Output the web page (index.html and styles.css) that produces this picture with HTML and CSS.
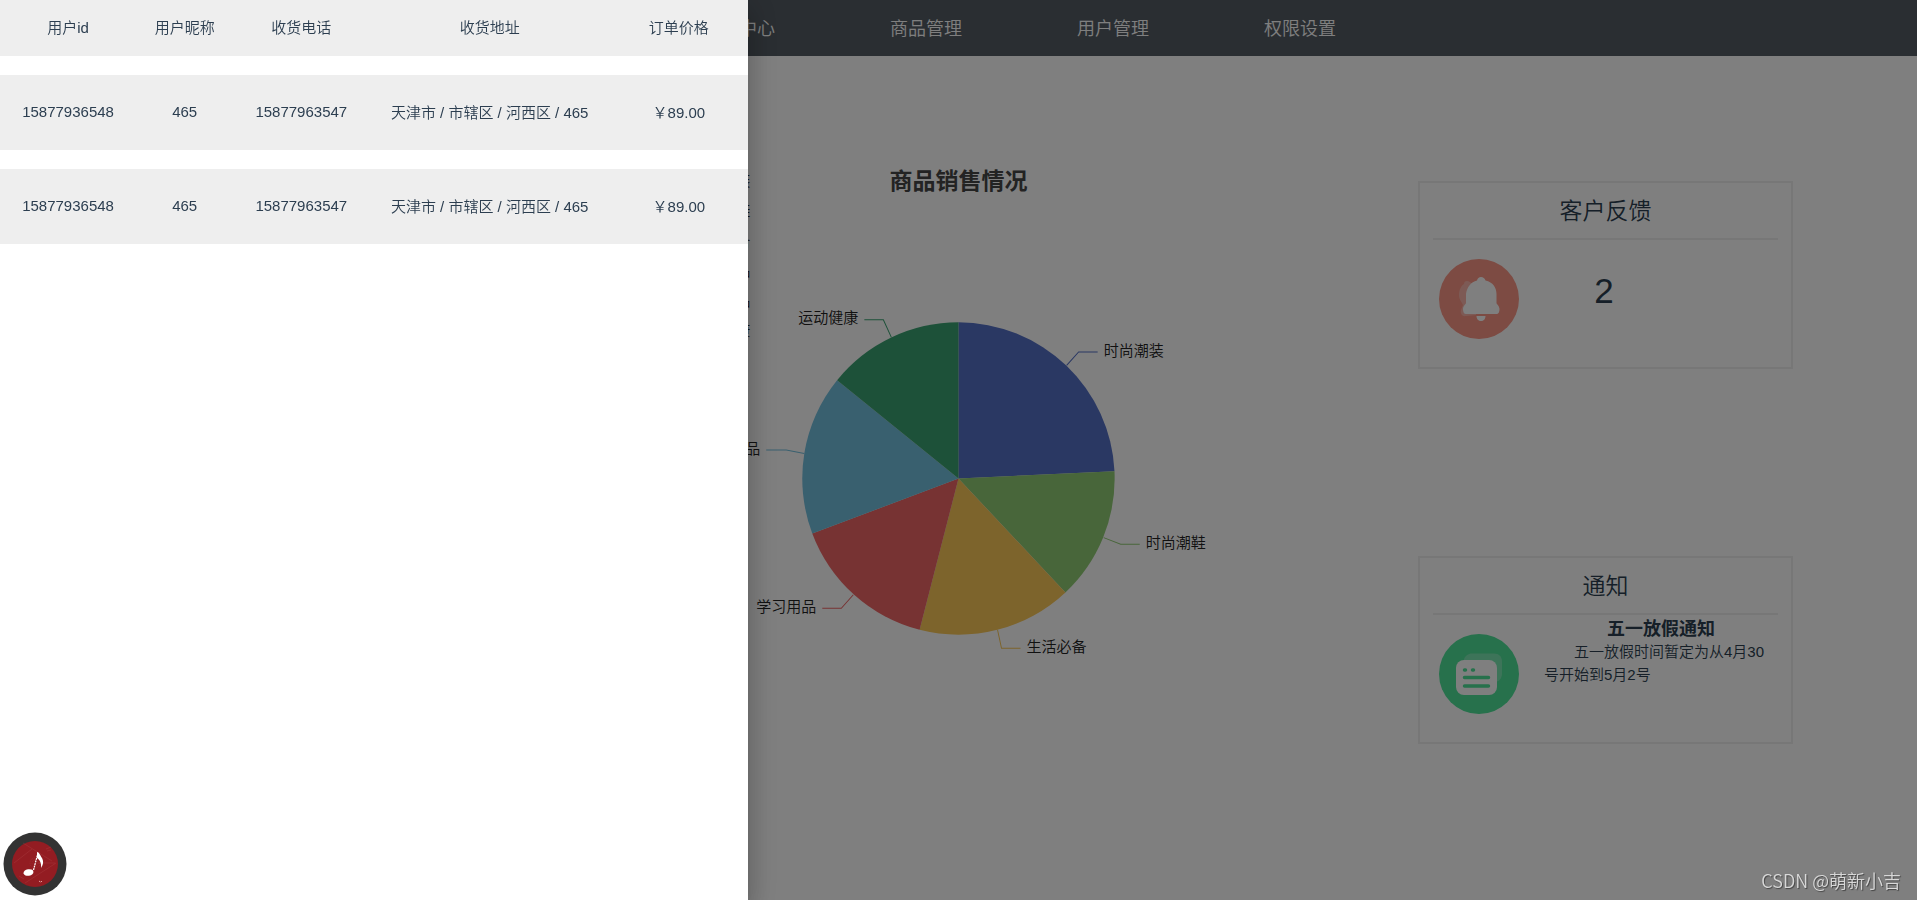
FILE: index.html
```html
<!DOCTYPE html>
<html lang="zh-CN">
<head>
<meta charset="utf-8">
<title>商品销售情况</title>
<link rel="stylesheet" href="styles.css">
</head>
<body>
<header class="topbar">
  <nav class="nav">
    <a class="nav-link" href="#orders">订单中心</a>
    <a class="nav-link" href="#goods">商品管理</a>
    <a class="nav-link" href="#users">用户管理</a>
    <a class="nav-link" href="#roles">权限设置</a>
  </nav>
</header>

<main class="board">
  <section class="chart-col">
    <svg class="chart" viewBox="-335 -398 670 640" role="img" aria-label="商品销售情况">
      <text class="chart-title" x="0" y="-289">商品销售情况</text>
      <g class="labels">
        <text class="label-left" x="-208" y="-292">时尚潮装</text>
        <text class="label-left" x="-208" y="-262">时尚潮鞋</text>
        <text class="label-left" x="-208" y="-232">生活必备</text>
        <text class="label-left" x="-208" y="-202">学习用品</text>
        <text class="label-left" x="-208" y="-172">家居用品</text>
        <text class="label-left" x="-208" y="-142">运动健康</text>
      </g>
      <g class="slices">
        <path fill="#5470c6" d="M0 0L0 -156A156 156 0 0 1 155.8 -7.3Z"/>
        <path fill="#91cc75" d="M0 0L155.8 -7.3A156 156 0 0 1 106.8 113.7Z"/>
        <path fill="#fac858" d="M0 0L106.8 113.7A156 156 0 0 1 -38.8 151.1Z"/>
        <path fill="#ee6666" d="M0 0L-38.8 151.1A156 156 0 0 1 -146 54.9Z"/>
        <path fill="#73c0de" d="M0 0L-146 54.9A156 156 0 0 1 -121.2 -98.2Z"/>
        <path fill="#3ba272" d="M0 0L-121.2 -98.2A156 156 0 0 1 0 -156Z"/>
      </g>
      <g class="leaders">
        <path stroke="#5470c6" d="M108 -113L120 -126.500H139"/>
        <path stroke="#91cc75" d="M145 59L162 65.500H181"/>
        <path stroke="#fac858" d="M39 151L43 169.500H62"/>
        <path stroke="#ee6666" d="M-105 116L-117 129.500H-136"/>
        <path stroke="#73c0de" d="M-154 -25L-172 -28.500H-192"/>
        <path stroke="#3ba272" d="M-67 -141L-75 -158.500H-94"/>
      </g>
      <g class="labels">
        <text x="145" y="-122">时尚潮装</text>
        <text x="187" y="69">时尚潮鞋</text>
        <text x="68" y="173">生活必备</text>
        <text class="label-left" x="-142" y="133">学习用品</text>
        <text class="label-left" x="-198" y="-25">家居用品</text>
        <text class="label-left" x="-100" y="-155">运动健康</text>
      </g>
    </svg>
  </section>

  <aside class="cards">
    <section class="card">
      <h2 class="card-title">客户反馈</h2>
      <div class="card-body">
        <svg class="card-icon" viewBox="0 0 80 80" aria-hidden="true">
          <circle cx="40" cy="40" r="40" fill="#fa9686"/>
          <path fill="#fff" opacity=".3" d="M28 22c2 0 3 1 4 2l5 3v29l-10 1c-4 1-6-3-5-6l2-5c-1-3-4-5-4-10 0-5 2-9 5-11 0-2 1-3 3-3Z"/>
          <path fill="#fff" d="M42 18c2 0 4 1.500 4.500 3.500C54 23 57.500 29 57.500 35v9c0 1 3 3 3 6 0 3-1 5-3 5H27c-2 0-3-2-3-5 0-3 3-5 3-6v-9c1-7 5-12 11-13.500C38.500 19.500 40 18 42 18Z"/>
          <path fill="#fff" d="M37.500 57h9c0 3-2 5-4.500 5s-4.500-2-4.500-5Z"/>
        </svg>
        <p class="count">2</p>
      </div>
    </section>

    <section class="card">
      <h2 class="card-title">通知</h2>
      <div class="card-body">
        <svg class="card-icon" viewBox="0 0 80 80" aria-hidden="true">
          <circle cx="40" cy="40" r="40" fill="#4ee298"/>
          <path fill="#fff" opacity=".25" d="M25 26v-1c1-3 4-5.500 8-5.500h22c5 0 8 3 8 8v12c0 4-2 7-5 8Z"/>
          <rect x="17" y="26" width="41" height="35" rx="8" fill="#fff"/>
          <path stroke="#4ee298" stroke-width="3.500" stroke-linecap="round" d="M25.500 36h1M33.500 36h1M25.500 43.500h24M25.500 52h24"/>
        </svg>
        <div class="notice">
          <h3 class="notice-title">五一放假通知</h3>
          <p class="notice-text">五一放假时间暂定为从4月30号开始到5月2号</p>
        </div>
      </div>
    </section>
  </aside>
</main>

<div class="mask"></div>

<section class="drawer" aria-label="订单">
  <table class="orders">
    <colgroup>
      <col class="col-id"><col class="col-name"><col class="col-phone"><col class="col-address"><col class="col-price">
    </colgroup>
    <thead>
      <tr><th>用户id</th><th>用户昵称</th><th>收货电话</th><th>收货地址</th><th>订单价格</th></tr>
    </thead>
    <tbody>
      <tr><td>15877936548</td><td>465</td><td>15877963547</td><td>天津市 / 市辖区 / 河西区 / 465</td><td>￥89.00</td></tr>
      <tr><td>15877936548</td><td>465</td><td>15877963547</td><td>天津市 / 市辖区 / 河西区 / 465</td><td>￥89.00</td></tr>
    </tbody>
  </table>
</section>

<button class="music" type="button" aria-label="播放音乐">
  <svg class="music-icon" viewBox="0 0 64 64" aria-hidden="true">
    <circle cx="32" cy="32" r="31.500" fill="#333"/>
    <circle cx="32" cy="32" r="23" fill="#931c22"/>
    <g fill="none" stroke="#b4494c" stroke-width=".6" opacity=".5">
      <path d="M20 11L49 29M11 31L29 17M35 31h17M22 51L53 31" />
      <circle cx="32" cy="31" r="5" stroke-dasharray="1 1"/>
      <circle cx="32" cy="31" r="3" stroke-dasharray="1 1"/>
      <path d="M43 17l5-2M44 19l4-1M16 44l5 3"/>
    </g>
    <ellipse cx="25.500" cy="40.500" rx="5" ry="3.300" fill="#fff" transform="rotate(-10 25.500 40.500)"/>
    <path d="M30.500 38L35 21" stroke="#fff" stroke-width="1.200" stroke-dasharray="2 .6" fill="none"/>
    <path d="M34 20c2 0 3 3 5 6 2 4 1 7-1 10 .5-5-1-8-4-10Z" fill="#fff"/>
    <path d="M36 49l1.500 1M39 49l-1 1" stroke="#e4a0a0" fill="none"/>
  </svg>
</button>

<p class="watermark">CSDN @萌新小吉</p>
</body>
</html>
```
FILE: styles.css
```css
* {
  box-sizing: border-box;
}

body {
  margin: 0;
  min-height: 100vh;
  overflow: hidden;
  background: #fff;
  color: #2c3e50;
  font-family: "Liberation Sans", "Noto Sans CJK SC", sans-serif;
  font-size: 15px;
  font-weight: 350;
}

h2,
h3,
p {
  margin: 0;
}

.topbar {
  height: 56px;
  background: #545c64;
}

.nav {
  display: flex;
  height: 100%;
  padding-bottom: 3px;
  padding-left: calc(50% - 313px);
}

.nav-link {
  display: flex;
  align-items: center;
  justify-content: center;
  width: 187px;
  color: #fff;
  font-size: 18px;
  text-decoration: none;
}

.board {
  display: grid;
  grid-template-columns: 1fr 35% 1fr;
  padding-top: 24px;
}

.chart-col {
  grid-column: 2;
}

.chart {
  display: block;
  width: 100%;
  overflow: visible;
}

.chart-title {
  fill: #464646;
  font-size: 23px;
  font-weight: 700;
  text-anchor: middle;
}

.leaders {
  fill: none;
  stroke-width: 1;
}

.labels {
  fill: #222;
  font-size: 15px;
}

.label-left {
  text-anchor: end;
}

.cards {
  display: flex;
  flex-direction: column;
  align-items: center;
  gap: 187px;
  padding-top: 101px;
}

.card {
  width: 375px;
  height: 188px;
  padding: 0 13px;
  border: 2px solid #eee;
}

.card-title {
  padding-top: 2px;
  border-bottom: 2px solid #eee;
  font-size: 23px;
  font-weight: 350;
  line-height: 53px;
  text-align: center;
}

.card-body {
  display: flex;
  gap: 25px;
  padding-left: 6px;
}

.card-icon {
  flex: none;
  width: 80px;
  height: 80px;
  margin-top: 19px;
}

.count {
  width: 120px;
  padding-top: 29px;
  font-size: 35px;
  line-height: 44px;
  text-align: center;
}

.notice {
  flex: 1;
  padding-top: 3px;
}

.notice-title {
  font-size: 18px;
  font-weight: 700;
  line-height: 22px;
  text-align: center;
}

.notice-text {
  line-height: 23px;
  text-indent: 2em;
}

.mask {
  position: fixed;
  inset: 0;
  background: rgba(0, 0, 0, 0.5);
}

.drawer {
  position: fixed;
  top: 0;
  bottom: 0;
  left: 0;
  width: 39%;
  background: #fff;
  box-shadow:
    0 8px 10px -5px rgba(0, 0, 0, 0.2),
    0 16px 24px 2px rgba(0, 0, 0, 0.14),
    0 6px 30px 5px rgba(0, 0, 0, 0.12);
}

.orders {
  width: 100%;
  border-spacing: 0;
  table-layout: fixed;
  text-align: center;
}

.col-id,
.col-phone {
  width: 18.2%;
}

.col-name {
  width: 13%;
}

.col-address {
  width: 32.2%;
}

.col-price {
  width: 18.4%;
}

.orders th,
.orders td {
  padding: 0 0 3px;
  background: #eee;
  font-weight: 350;
  white-space: nowrap;
}

.orders th {
  height: 56px;
}

.orders td {
  height: 94px;
  border-top: 19px solid #fff;
}

.music {
  position: fixed;
  bottom: 4px;
  left: 3px;
  width: 64px;
  height: 64px;
  padding: 0;
  border: 0;
  border-radius: 50%;
  background: none;
}

.music-icon {
  display: block;
}

.watermark {
  position: fixed;
  right: 16px;
  bottom: 7px;
  color: #d8d8d8;
  font-family: "Noto Sans CJK SC", sans-serif;
  font-size: 18px;
  line-height: 26px;
  text-shadow: 1px 1px 1px #444;
}
```
